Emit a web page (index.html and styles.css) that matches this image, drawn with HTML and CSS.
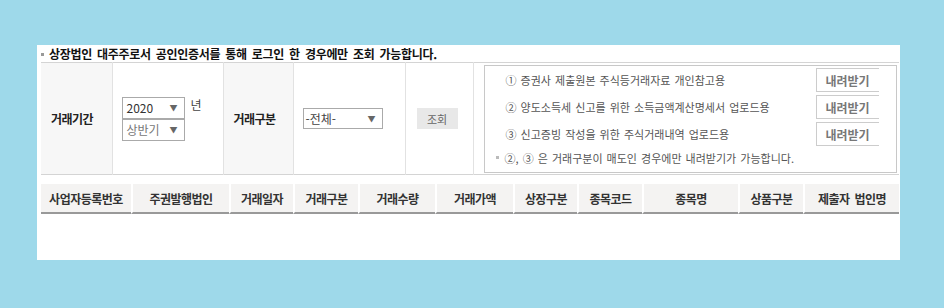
FILE: index.html
```html
<!DOCTYPE html>
<html lang="ko">
<head>
<meta charset="UTF-8">
<title>주식등거래내역 조회</title>
<link rel="stylesheet" href="styles.css">
</head>
<body>

<div class="panel">
    <p class="notice"><span class="bullet"></span>상장법인 대주주로서 공인인증서를 통해 로그인 한 경우에만 조회 가능합니다.</p>

    <table class="search">
        <colgroup>
            <col class="w-label1">
            <col class="w-period">
            <col class="w-label2">
            <col class="w-type">
            <col class="w-btn">
            <col>
        </colgroup>
        <tr>
            <th class="first">거래기간</th>
            <td>
                <div class="period">
                    <div class="stack">
                        <div class="sel sel-year"><span>2020</span><span class="arrow">▼</span></div>
                        <div class="sel sel-half"><span>상반기</span><span class="arrow">▼</span></div>
                    </div>
                    <span class="unit">년</span>
                </div>
            </td>
            <th>거래구분</th>
            <td>
                <div class="sel sel-type"><span>-전체-</span><span class="arrow">▼</span></div>
            </td>
            <td class="cell-btn"><button class="btn-search">조회</button></td>
            <td class="cell-info">
                <div class="info">
                    <div class="info-row">
                        <span class="info-text">① 증권사 제출원본 주식등거래자료 개인참고용</span>
                        <button class="btn-down">내려받기</button>
                    </div>
                    <div class="info-row">
                        <span class="info-text">② 양도소득세 신고를 위한 소득금액계산명세서 업로드용</span>
                        <button class="btn-down">내려받기</button>
                    </div>
                    <div class="info-row">
                        <span class="info-text">③ 신고증빙 작성을 위한 주식거래내역 업로드용</span>
                        <button class="btn-down">내려받기</button>
                    </div>
                    <p class="info-note"><span class="dot"></span>②, ③ 은 거래구분이 매도인 경우에만 내려받기가 가능합니다.</p>
                </div>
            </td>
        </tr>
    </table>

    <table class="result">
        <colgroup>
            <col style="width: 90px">
            <col style="width: 98px">
            <col style="width: 64px">
            <col style="width: 65px">
            <col style="width: 77px">
            <col style="width: 78px">
            <col style="width: 64px">
            <col style="width: 65px">
            <col style="width: 96px">
            <col style="width: 65px">
            <col>
        </colgroup>
        <thead>
            <tr>
                <th>사업자등록번호</th>
                <th>주권발행법인</th>
                <th>거래일자</th>
                <th>거래구분</th>
                <th>거래수량</th>
                <th>거래가액</th>
                <th>상장구분</th>
                <th>종목코드</th>
                <th>종목명</th>
                <th>상품구분</th>
                <th>제출자 법인명</th>
            </tr>
        </thead>
        <tbody></tbody>
    </table>
</div>

</body>
</html>
```

FILE: styles.css
```css
/* Global Styles */
body {
    margin: 0;
    background-color: #9ed9ea;
    font-family: "Noto Sans CJK KR", "Noto Sans", sans-serif;
    font-size: 12px;
    color: #333;
}

.panel {
    width: 859px;
    height: 215px;
    margin: 45px 0 0 37px;
    padding: 0 0 0 4px;
    background-color: #fff;
}

.notice {
    margin: 0;
    height: 17px;
    line-height: 16px;
    font-weight: bold;
    color: #111;
    letter-spacing: -0.3px;
    word-spacing: 2px;
    display: flex;
    align-items: center;
}

.bullet {
    display: inline-block;
    width: 3px;
    height: 3px;
    background-color: #999;
    margin: 1px 5px 0 0;
}

/* Search table */
.search {
    width: 858px;
    height: 113px;
    table-layout: fixed;
    border-collapse: collapse;
    border-top: 1px solid #d4d4d4;
    border-bottom: 1px solid #d4d4d4;
}

.w-label1 { width: 71px; }
.w-period { width: 111px; }
.w-label2 { width: 70px; }
.w-type { width: 112px; }
.w-btn { width: 68px; }

.search th,
.search td {
    padding: 0 0 0 9px;
    border-left: 1px solid #e2e2e2;
    vertical-align: middle;
}

.search th {
    background-color: #f7f7f7;
    text-align: left;
    padding-left: 10px;
    font-weight: bold;
    color: #222;
    letter-spacing: -0.5px;
}

.search th.first {
    border-left: none;
}

.search .cell-btn {
    padding-left: 11px;
}

.search .cell-info {
    padding-left: 10px;
}

.period {
    display: flex;
    align-items: flex-start;
}

.stack {
    display: flex;
    flex-direction: column;
}

.unit {
    margin: -1px 0 0 6px;
    color: #444;
}

.sel {
    box-sizing: border-box;
    display: flex;
    justify-content: space-between;
    align-items: center;
    height: 22px;
    border: 1px solid #aaa;
    padding: 0 6px 0 4px;
    background-color: #fff;
    color: #333;
}

.sel-year,
.sel-half {
    width: 63px;
}

.sel-half {
    color: #777;
}

.sel-type {
    width: 80px;
    height: 21px;
    padding-left: 2px;
    color: #444;
}

.arrow {
    font-size: 8px;
    color: #666;
}

.btn-search {
    width: 41px;
    height: 21px;
    padding: 0;
    border: none;
    background-color: #e8e8e8;
    font-family: inherit;
    font-size: 11px;
    color: #666;
}

/* Download box */
.info {
    box-sizing: border-box;
    width: 413px;
    height: 108px;
    border: 1px solid #c8c8c8;
    padding: 1px 0 0 21px;
}

.info-row {
    display: flex;
    align-items: center;
    height: 27px;
}

.info-text {
    width: 310px;
    color: #555;
    word-spacing: 1px;
    font-size: 11px;
}

.btn-down {
    box-sizing: border-box;
    width: 63px;
    height: 24px;
    padding: 0;
    border: 1px solid #ccc;
    border-right: none;
    background-color: #fff;
    font-family: inherit;
    font-size: 12px;
    font-weight: bold;
    color: #777;
}

.info-note {
    margin: 2px 0 0 -10px;
    display: flex;
    align-items: center;
    color: #555;
    font-size: 11px;
    word-spacing: 1px;
}

.dot {
    display: inline-block;
    width: 3px;
    height: 3px;
    background-color: #bbb;
    margin-right: 6px;
}

/* Result table */
.result {
    width: 858px;
    margin-top: 9px;
    border-collapse: separate;
    border-spacing: 0;
    table-layout: fixed;
}

.result th {
    height: 28px;
    padding: 0;
    background-color: #f4f3f2;
    border-left: 2px solid #fff;
    border-bottom: 2px solid #999;
    font-weight: bold;
    color: #333;
    letter-spacing: -0.5px;
    word-spacing: 2px;
    text-align: center;
}

.result th:first-child {
    border-left: none;
}
```
